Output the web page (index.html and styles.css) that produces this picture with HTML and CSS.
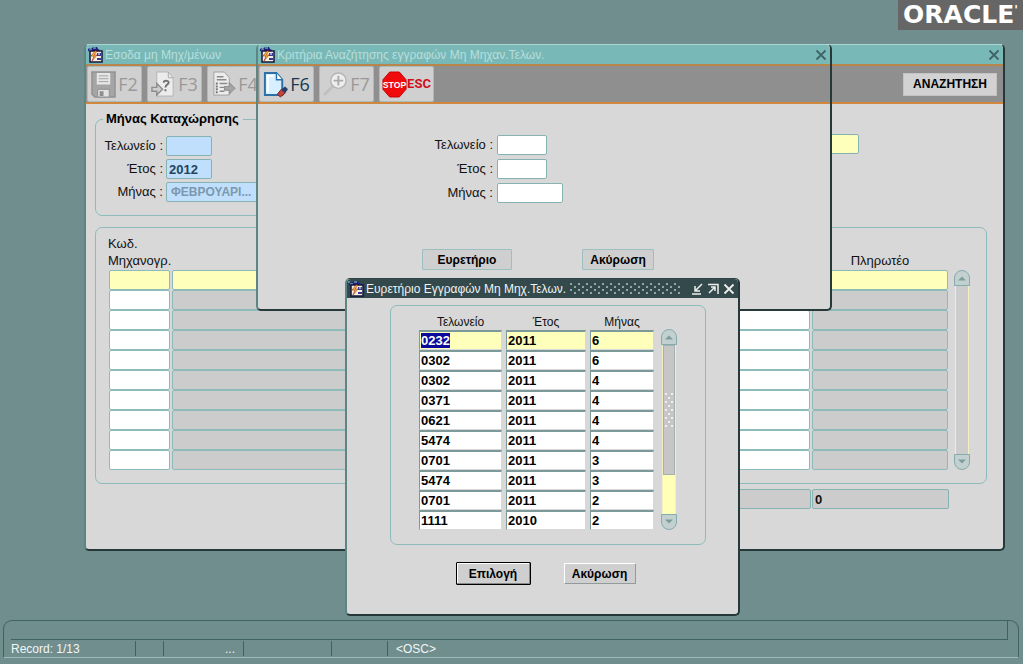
FILE: index.html
```html
<!DOCTYPE html>
<html lang="el">
<head>
<meta charset="utf-8">
<title>Oracle Forms</title>
<link rel="stylesheet" href="styles.css">
</head>
<body>
<svg class="defs" aria-hidden="true">
  <symbol id="app" viewBox="0 0 17 17">
    <path d="M2 2l3 1 2-2h4l1 2 2 1-2 2H6L2 5z" fill="#20207c"/>
    <path d="M1 2h2M3 4h3M7 2h3" stroke="#8fd0e8" stroke-width="1"/>
    <path d="M4 5h12v11H4z" fill="#f4f0e0" stroke="#15153c" stroke-width="1.5"/>
    <path d="M9 5l-4 5h3l-2 5 5-6H8l3-4z" fill="#f4c430" stroke="#a02020" stroke-width=".6"/>
    <path d="M11 7h4v3h-4zM11 12h4v2h-4z" fill="#3a3a90"/>
    <path d="M12 8h2" stroke="#fff"/>
  </symbol>
  <symbol id="close" viewBox="0 0 12 12"><path d="M1.500 1.500l9 9M10.500 1.500l-9 9" fill="none" stroke="currentColor" stroke-width="1.800"/></symbol>
  <symbol id="up" viewBox="0 0 16 16"><path d="M.5 15.500V8a7.500 7.500 0 0 1 15 0v7.500z" fill="#c3d0d0" stroke="#86abac"/><path d="M4 10.500l4-4 4 4z" fill="#7f9c9d"/></symbol>
  <symbol id="down" viewBox="0 0 16 16"><path d="M.5.5V8a7.500 7.500 0 0 0 15 0V.5z" fill="#c3d0d0" stroke="#86abac"/><path d="M4 5.500l4 4 4-4z" fill="#7f9c9d"/></symbol>
</svg>

<div class="brand">ORACLE<span class="mark-r">'</span></div>

<main class="desktop">
  <section class="window main-window" aria-label="Εσοδα μη Μηχ/μένων">
    <header class="title"><svg class="app-icon"><use href="#app"/></svg><span class="title-text">Εσοδα μη Μηχ/μένων</span><button class="win-btn" aria-label="Κλείσιμο"><svg><use href="#close"/></svg></button></header>
    <div class="toolbar">
      <button class="tool off"><svg viewBox="0 0 26 28"><path d="M1 1h24v26H4l-3-3z" fill="#a5a5a5" stroke="#929292" stroke-width="1.500"/><path d="M6 2h14v12H6z" fill="#e6e6e6"/><path d="M8 5h10M8 8h10M8 11h10" stroke="#a0a0a0"/><path d="M7 19h12v8H7z" fill="#e2e2e2" stroke="#909090"/><path d="M9 21h4v5H9z" fill="#8d8d8d"/></svg>F2</button>
      <button class="tool off"><svg viewBox="0 0 26 28"><path d="M6 1h12l5 6v19H6z" fill="#ececec" stroke="#b4b4b4"/><path d="M18 1v6h5" fill="none" stroke="#a8a8a8"/><path d="M13 12c1-3 7-2 5 1-1 1-3 2-3 4M15 19v2" fill="none" stroke="#707070" stroke-width="2"/><path d="M1 17h5v-4l6 6-6 6v-4H1z" fill="#cfcfcf" stroke="#8d8d8d" stroke-width="1.500"/></svg>F3</button>
      <button class="tool off"><svg viewBox="0 0 26 28"><path d="M3 1h11l5 6v18H3z" fill="#ececec" stroke="#a0a0a0"/><path d="M6 6h7M6 9h10M9 13h8M9 17h5M9 21h5" stroke="#8a8a8a" stroke-width="1.500"/><path d="M6 12v12" stroke="#757575" stroke-width="2" stroke-dasharray="2 1"/><path d="M14 16h5v-4l6 6-6 6v-4h-5z" fill="#a4a4a4" stroke="#8b8b8b"/></svg>F4</button>
      <button class="search">ΑΝΑΖΗΤΗΣΗ</button>
    </div>
    <div class="main-body">
      <div class="top-row">
        <fieldset class="group entry">
          <legend>Μήνας Καταχώρησης</legend>
          <label for="m1">Τελωνείο :</label><input id="m1" class="field blue w46">
          <label for="m2">Έτος :</label><input id="m2" class="field blue w46" value="2012">
          <label for="m3">Μήνας :</label><input id="m3" class="field blue month" value="ΦΕΒΡΟΥΑΡΙ...">
        </fieldset>
        <input class="field yellow code" aria-label="Κωδικός">
      </div>
      <div class="group records">
        <table class="ledger">
          <thead><tr><th class="c1">Κωδ.<br>Μηχανογρ.</th><th></th><th class="c3"></th><th class="c4">Πληρωτέο</th></tr></thead>
          <tbody>
            <tr class="current"><td><input aria-label="Κωδ. 1"></td><td><input aria-label="Περιγραφή 1"></td><td><input aria-label="Ποσό 1"></td><td><input aria-label="Πληρωτέο 1"></td></tr>
            <tr><td><input aria-label="Κωδ. 2"></td><td><input aria-label="Περιγραφή 2"></td><td><input aria-label="Ποσό 2"></td><td><input aria-label="Πληρωτέο 2"></td></tr>
            <tr><td><input aria-label="Κωδ. 3"></td><td><input aria-label="Περιγραφή 3"></td><td><input aria-label="Ποσό 3"></td><td><input aria-label="Πληρωτέο 3"></td></tr>
            <tr><td><input aria-label="Κωδ. 4"></td><td><input aria-label="Περιγραφή 4"></td><td><input aria-label="Ποσό 4"></td><td><input aria-label="Πληρωτέο 4"></td></tr>
            <tr><td><input aria-label="Κωδ. 5"></td><td><input aria-label="Περιγραφή 5"></td><td><input aria-label="Ποσό 5"></td><td><input aria-label="Πληρωτέο 5"></td></tr>
            <tr><td><input aria-label="Κωδ. 6"></td><td><input aria-label="Περιγραφή 6"></td><td><input aria-label="Ποσό 6"></td><td><input aria-label="Πληρωτέο 6"></td></tr>
            <tr><td><input aria-label="Κωδ. 7"></td><td><input aria-label="Περιγραφή 7"></td><td><input aria-label="Ποσό 7"></td><td><input aria-label="Πληρωτέο 7"></td></tr>
            <tr><td><input aria-label="Κωδ. 8"></td><td><input aria-label="Περιγραφή 8"></td><td><input aria-label="Ποσό 8"></td><td><input aria-label="Πληρωτέο 8"></td></tr>
            <tr><td><input aria-label="Κωδ. 9"></td><td><input aria-label="Περιγραφή 9"></td><td><input aria-label="Ποσό 9"></td><td><input aria-label="Πληρωτέο 9"></td></tr>
            <tr><td><input aria-label="Κωδ. 10"></td><td><input aria-label="Περιγραφή 10"></td><td><input aria-label="Ποσό 10"></td><td><input aria-label="Πληρωτέο 10"></td></tr>
          </tbody>
        </table>
        <div class="scroll"><svg><use href="#up"/></svg><div class="track idle"></div><svg><use href="#down"/></svg></div>
      </div>
      <div class="totals"><input class="field grey" aria-label="Σύνολο"><input class="field grey pay" aria-label="Σύνολο πληρωτέο" value="0"></div>
    </div>
  </section>

  <section class="window criteria" aria-label="Κριτήρια Αναζήτησης">
    <header class="title"><svg class="app-icon"><use href="#app"/></svg><span class="title-text">Κριτήρια Αναζήτησης εγγραφών Μη Μηχαν.Τελων.</span><button class="win-btn" aria-label="Κλείσιμο"><svg><use href="#close"/></svg></button></header>
    <div class="toolbar">
      <button class="tool"><svg viewBox="0 0 26 28"><path d="M2 2h12l6 7v16H2z" fill="#d8efff" stroke="#2b70a8" stroke-width="2"/><path d="M14 2v7h6" fill="#fff" stroke="#2b70a8" stroke-width="1.500"/><path d="M5 22V5h6" fill="none" stroke="#fff" stroke-width="2"/><path d="M15 24l4-5 4 4-5 4z" fill="#c4433c" stroke="#7a1c1c"/><path d="M19 19l4-3 3 3-3 4z" fill="#26406c"/></svg>F6</button>
      <button class="tool off"><svg viewBox="0 0 26 28"><path d="M11 15L1 25" stroke="#c0c0c0" stroke-width="3"/><circle cx="16" cy="10" r="8" fill="#eee" stroke="#b5b5b5" stroke-width="1.500"/><path d="M16 5v10M11 10h10" stroke="#aaa" stroke-width="2"/></svg>F7</button>
      <button class="tool stop" aria-label="STOP ESC"><svg viewBox="0 0 26 28"><path d="M8 1h10l7 8v10l-7 8H8l-7-8V9z" fill="#f00c0c" stroke="#c80000"/><text x="13" y="18" text-anchor="middle" class="stop-text">STOP</text></svg>ESC</button>
    </div>
    <div class="criteria-body">
      <div class="criteria-form">
        <label for="k1">Τελωνείο :</label><input id="k1" class="field w50">
        <label for="k2">Έτος :</label><input id="k2" class="field w50">
        <label for="k3">Μήνας :</label><input id="k3" class="field w66">
      </div>
      <div class="criteria-actions"><button class="btn wide">Ευρετήριο</button><button class="btn">Ακύρωση</button></div>
    </div>
  </section>

  <section class="window lookup" role="dialog" aria-label="Ευρετήριο Εγγραφών">
    <header class="title dark"><svg class="app-icon"><use href="#app"/></svg><span class="title-text">Ευρετήριο Εγγραφών Μη Μηχ.Τελων.</span><span class="grip"></span>
      <button class="win-btn" aria-label="Ελαχιστοποίηση"><svg viewBox="0 0 12 12"><path d="M11 1L5 7M4 3v5h5M1 11h9" fill="none" stroke="currentColor" stroke-width="1.500"/></svg></button>
      <button class="win-btn" aria-label="Μεγιστοποίηση"><svg viewBox="0 0 12 12"><path d="M1 1.500h10V11M2 10l6-6M4 4h4v4" fill="none" stroke="currentColor" stroke-width="1.500"/></svg></button>
      <button class="win-btn" aria-label="Κλείσιμο"><svg><use href="#close"/></svg></button></header>
    <div class="lookup-body">
      <div class="group list">
        <table class="results">
          <thead><tr><th class="r1">Τελωνείο</th><th class="r2">Έτος</th><th class="r3">Μήνας</th></tr></thead>
          <tbody>
            <tr class="current"><td><mark>0232</mark></td><td>2011</td><td>6</td></tr>
            <tr><td>0302</td><td>2011</td><td>6</td></tr>
            <tr><td>0302</td><td>2011</td><td>4</td></tr>
            <tr><td>0371</td><td>2011</td><td>4</td></tr>
            <tr><td>0621</td><td>2011</td><td>4</td></tr>
            <tr><td>5474</td><td>2011</td><td>4</td></tr>
            <tr><td>0701</td><td>2011</td><td>3</td></tr>
            <tr><td>5474</td><td>2011</td><td>3</td></tr>
            <tr><td>0701</td><td>2011</td><td>2</td></tr>
            <tr><td>1111</td><td>2010</td><td>2</td></tr>
          </tbody>
        </table>
        <div class="scroll"><svg><use href="#up"/></svg><div class="track"><div class="thumb"><span class="thumb-grip"></span></div></div><svg><use href="#down"/></svg></div>
      </div>
      <div class="lookup-actions"><button class="btn raised default">Επιλογή</button><button class="btn raised">Ακύρωση</button></div>
    </div>
  </section>
</main>

<footer class="status">
  <div class="message"></div>
  <div class="cells"><span class="s1">Record: 1/13</span><span class="s2"></span><span class="s3">...</span><span class="s4"></span><span class="s5"></span><span class="s6">&lt;OSC&gt;</span></div>
</footer>
</body>
</html>
```

FILE: styles.css
```css
* { box-sizing: border-box; }
html, body { height: 100%; }
body {
  margin: 0;
  display: flex;
  flex-direction: column;
  overflow: hidden;
  background: #708e8d;
  color: #111;
  font: 12px/16px "Liberation Sans", Arial, sans-serif;
}
button, input { font: inherit; color: inherit; margin: 0; }
.defs { position: absolute; width: 0; height: 0; }

.brand {
  align-self: flex-end;
  display: flex;
  justify-content: center;
  width: 125px;
  height: 30px;
  background: #666;
  color: #fff;
  font: bold 25px/30px "DejaVu Sans", sans-serif;
}
.mark-r { font-size: 12px; line-height: 20px; }

.desktop { flex: 1; }

/* windows */
.window {
  position: absolute;
  background: #d8d8d8;
  border: 2px solid #5d8584;
  border-top: 1px solid #a9d5d3;
  border-right-color: #263838;
  border-bottom-color: #263838;
  border-radius: 5px;
}
.main-window { left: 84px; right: 18px; top: 44px; }
.criteria { left: 256px; top: 44px; width: 576px; }
.lookup { left: 345px; top: 278px; width: 395px; border-top-color: #2d4748; }

.title {
  display: flex;
  align-items: center;
  height: 19px;
  padding-right: 3px;
  border-radius: 4px 4px 0 0;
  background: #78b9b7;
  color: #b9dedd;
}
.title-text { margin-left: 2px; white-space: nowrap; }
.app-icon { width: 17px; height: 17px; }
.win-btn {
  width: 12px;
  height: 12px;
  padding: 0;
  border: 0;
  background: none;
  color: #3f6465;
}
.win-btn svg { display: block; width: 12px; height: 12px; }
.main-window .win-btn, .criteria .win-btn { margin-left: auto; }
.title.dark { gap: 4px; background: #34494b; color: #f0f4f4; }
.dark .title-text { margin-left: -2px; }
.dark .win-btn { color: #eee; }
.grip {
  flex: 1;
  height: 12px;
  margin: 0 6px 0 0;
  background:
    radial-gradient(circle at 1px 1px, #8fa5a6 1px, transparent 1px) 0 0 / 8px 6px,
    radial-gradient(circle at 5px 4px, #8fa5a6 1px, transparent 1px) 0 0 / 8px 6px;
}

.toolbar {
  display: flex;
  align-items: center;
  gap: 5px;
  height: 40px;
  padding: 0 6px 0 1px;
  border-top: 2px solid #b8864c;
  border-bottom: 2px solid #d2873f;
  background: #8f8f8f;
}
.tool {
  display: flex;
  align-items: center;
  justify-content: center;
  gap: 2px;
  width: 55px;
  height: 36px;
  padding: 0;
  border: 1px solid #a9bcbc;
  border-radius: 2px;
  background: #d0d0d0;
  color: #173850;
  font: 18px/24px "Open Sans", sans-serif;
}
.tool svg { width: 25px; height: 27px; flex: none; }
.tool.off { color: #999; }
.tool.stop { gap: 0; color: #d01020; font: bold 13px/20px Roboto, sans-serif; }
.stop-text { font: bold 9px "Liberation Sans", sans-serif; fill: #fff; }
.search {
  width: 94px;
  height: 23px;
  margin-left: auto;
  padding: 0;
  border: 1px solid #c4c4c4;
  background: #d2d2d2;
  color: #000;
  font-weight: bold;
}

/* fields */
.field {
  height: 20px;
  padding: 0 2px;
  border: 1px solid #86b3b2;
  border-radius: 2px;
  background: #fff;
  font-weight: bold;
  font-size: 13px;
}
.blue { background: #bfdffd; color: #24445c; }
.yellow { background: #ffffbc; }
.grey { background: #ccc; }
.w46 { width: 46px; }
.w50 { width: 50px; }
.w66 { width: 66px; }
.group { border: 1px solid #8dbbbb; border-radius: 7px; }

/* main window */
.main-body { padding: 7px 16px 40px 9px; }
.top-row { display: flex; justify-content: space-between; align-items: flex-start; }
.entry {
  display: grid;
  grid-template-columns: 60px 1fr;
  gap: 3px;
  align-items: center;
  width: 320px;
  margin: 0;
  padding: 9px 8px 13px 7px;
}
.entry legend { padding: 0 4px 0 3px; font-weight: bold; font-size: 13px; color: #000; }
.entry label, .criteria-form label { text-align: right; white-space: nowrap; font-size: 13px; }
.entry .month { width: 100px; padding-left: 4px; font-size: 12px; color: #7c98ae; }
.code { width: 80px; margin: 23px 128px 0 0; }
.records { display: flex; margin-top: 11px; padding: 7px 16px 13px 12px; }
.ledger { flex: 1; border-collapse: collapse; table-layout: fixed; }
.ledger th { padding: 0 0 1px; font-weight: normal; font-size: 13px; text-align: left; vertical-align: bottom; line-height: 17px; }
.ledger .c1 { width: 62px; white-space: nowrap; }
.ledger .c3 { width: 120px; }
.ledger .c4 { width: 138px; text-align: center; }
.ledger td { height: 20px; padding: 0 1px; }
.ledger input {
  display: block;
  width: 100%;
  height: 20px;
  padding: 0 2px;
  border: 1px solid #8dbbbb;
  border-radius: 2px;
  background: #fff;
  font-weight: bold;
}
.ledger td:nth-child(even) input { background: #ccc; }
.ledger .current input, .ledger .current td:nth-child(even) input { background: #ffffbc; }
.records .scroll { margin: 35px 0 0 5px; }
.totals { display: flex; justify-content: flex-end; gap: 1px; margin-top: 5px; padding-right: 38px; }
.pay { width: 137px; }

.scroll { display: flex; flex-direction: column; align-items: center; width: 16px; }
.scroll svg { flex: none; width: 16px; height: 16px; }
.track { flex: 1; width: 14px; background: #ffffb8; border: 1px solid #f0f0c4; border-width: 0 1px; }
.track.idle { background: #ccc; }
.thumb {
  display: flex;
  align-items: center;
  justify-content: center;
  height: 77%;
  border: 1px solid #a6b0b0;
  background: #c6c6c6;
}
.thumb-grip {
  width: 10px;
  height: 36px;
  background:
    radial-gradient(circle at 2px 2px, #f0f0f0 1px, transparent 1px) 0 0 / 6px 8px,
    radial-gradient(circle at 5px 6px, #f0f0f0 1px, transparent 1px) 0 0 / 6px 8px;
}

/* criteria */
.criteria-body { padding: 31px 0 39px 175px; }
.criteria-form { display: grid; grid-template-columns: 60px 1fr; gap: 4px; align-items: center; }
.criteria-actions { display: flex; gap: 70px; margin: 46px 0 0 -11px; }
.btn {
  min-width: 72px;
  height: 21px;
  padding: 0 6px;
  border: 1px solid #9cc0bf;
  border-radius: 1px;
  background: #cfcfcf;
  color: #000;
  font-weight: bold;
}
.wide { width: 90px; }

/* lookup */
.lookup-body { padding: 7px 32px 29px 43px; }
.list { display: flex; padding: 7px 28px 14px 24px; }
.results { flex: 1; border-collapse: separate; border-spacing: 4px 0; table-layout: fixed; }
.results th { height: 17px; padding: 0; font-weight: normal; }
.r1 { width: 83px; }
.r2 { width: 80px; }
.results td {
  height: 20px;
  padding: 0 1px;
  border: 1px solid #d8d8d8;
  border-top: 2px solid #7d9a9a;
  border-left: 1px solid #7d9a9a;
  background: #fff;
  color: #000;
  font-weight: bold;
  font-size: 13px;
}
.results .current td { background: #ffffbc; }
.results mark { background: #0a0a9c; color: #fff; }
.list .scroll { margin: 16px 0 0 3px; }
.lookup-actions {
  display: flex;
  align-items: center;
  justify-content: center;
  gap: 33px;
  margin-top: 17px;
  padding-right: 5px;
}
.raised { border: 1px solid; border-color: #fff #909c9c #909c9c #fff; }
.raised.default { width: 75px; height: 23px; border: 1px solid #000; box-shadow: inset -1px -1px #888, inset 1px 1px #fff; }

/* status bar */
.status {
  margin: 0 4px 6px 3px;
  padding: 0 10px 0 7px;
  border: 1px solid #3f6262;
  border-bottom-color: #9cbcbb;
  border-radius: 9px 9px 2px 2px;
  color: #f2f6f6;
}
.message { height: 19px; border-right: 1px solid #3f6262; border-bottom: 1px solid #3f6262; }
.cells { display: flex; align-items: center; height: 17px; }
.cells span { height: 15px; border-right: 1px solid #3f6262; white-space: nowrap; }
.cells .s1 { width: 125px; }
.s2 { width: 28px; }
.cells .s3 { width: 80px; padding-right: 8px; text-align: right; }
.s4 { width: 88px; }
.s5 { width: 56px; }
.cells .s6 { padding-left: 8px; border: 0; }
```
